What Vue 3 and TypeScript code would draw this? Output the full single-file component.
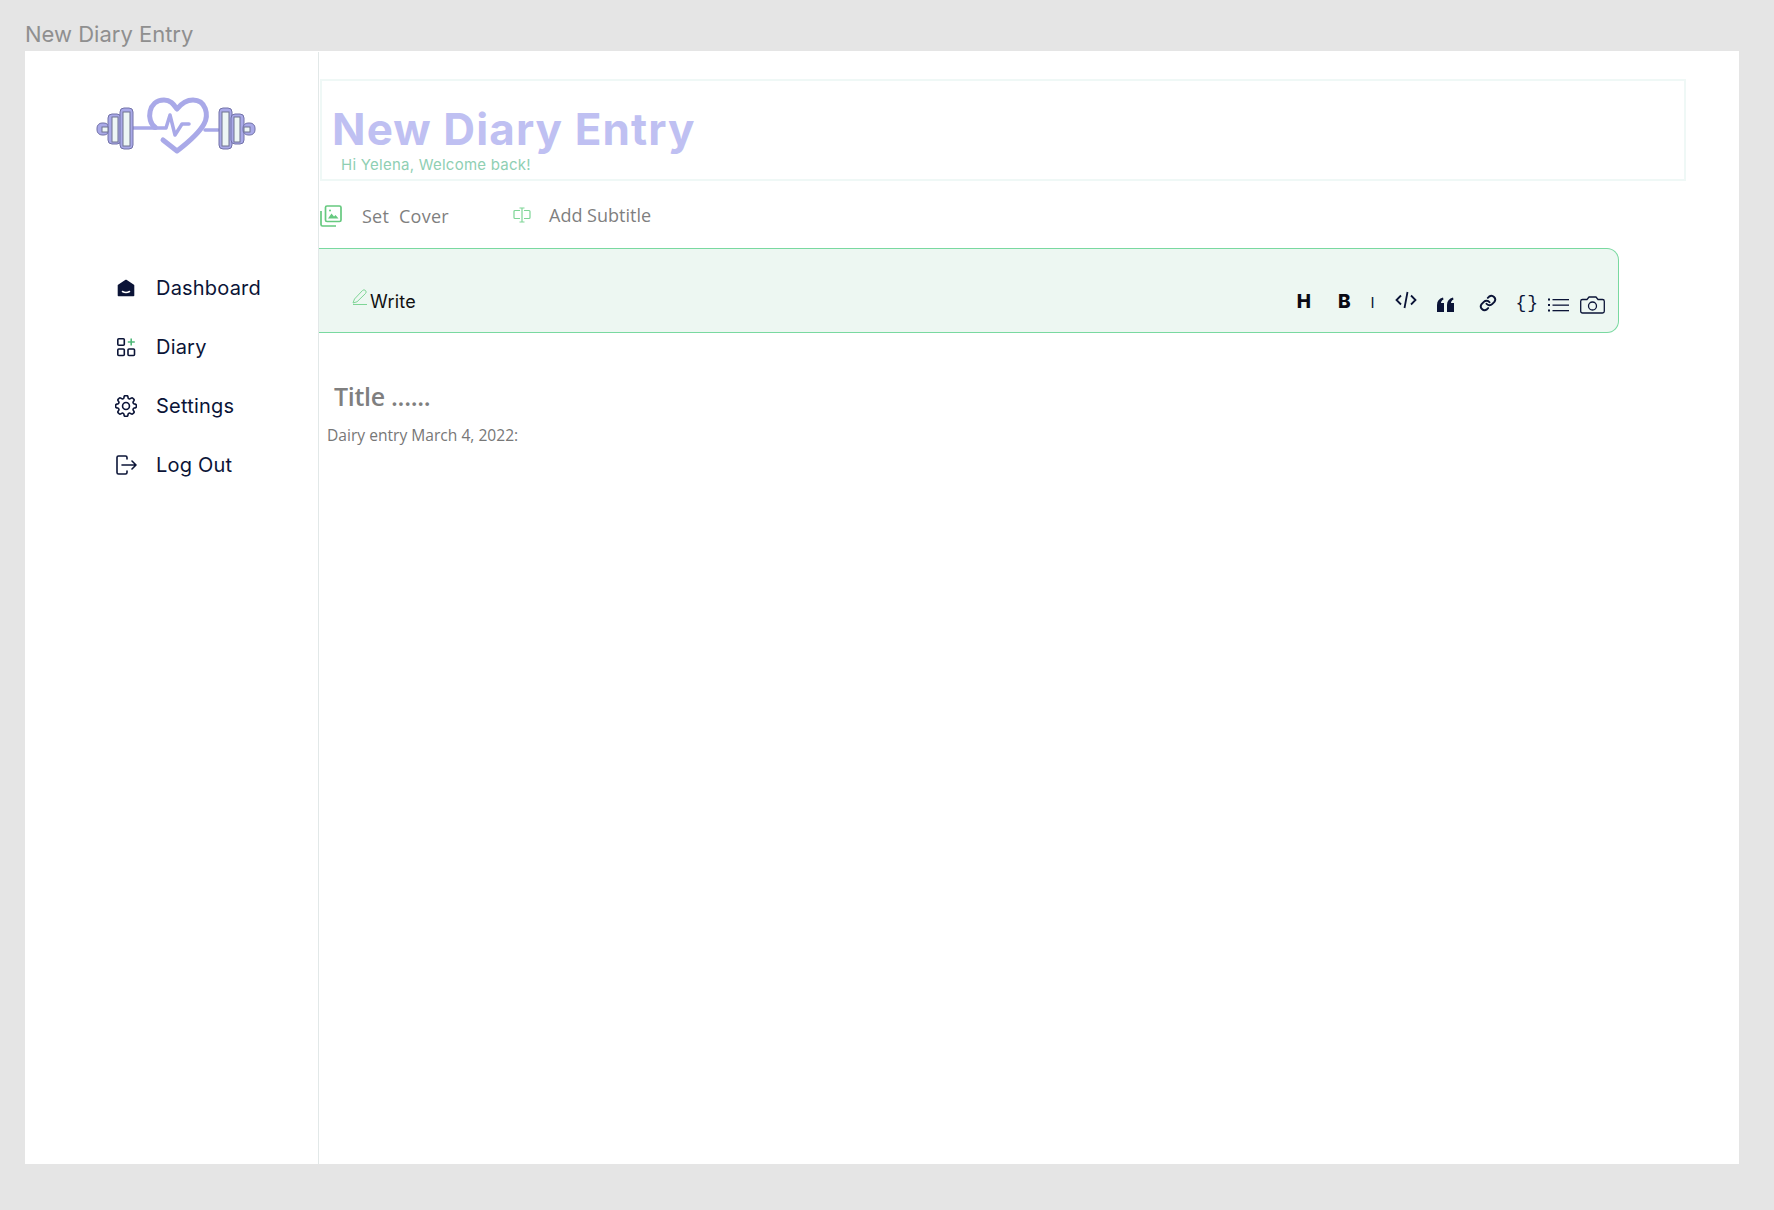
<script setup lang="ts">
const nav: { label: string; icon: string }[] = [
  { label: 'Dashboard', icon: 'home' },
  { label: 'Diary', icon: 'grid' },
  { label: 'Settings', icon: 'gear' },
  { label: 'Log Out', icon: 'logout' },
]
</script>

<template>
  <div class="page">
    <div class="frame-label">New Diary Entry</div>
    <div class="frame">
      <aside class="sidebar">
        <svg class="logo" width="160" height="58" viewBox="0 0 160 58" fill="none">
          <g stroke="#a9a9e8" stroke-linecap="round" stroke-linejoin="round">
            <path d="M36 31H60" stroke-width="3.500" />
            <path d="M109 33H122" stroke-width="3.500" />
            <path d="M59 30C50 24 52 3 68 3C75 3 78 8 81 12C85 7 90 3 97 3C110 3 113 18 108 27C102 38 90 47 81 54L67 43" stroke-width="5" />
            <path d="M58 31H70L74 18L79 38L86 27H93" stroke-width="3.500" />
          </g>
          <g stroke="#7272a8" stroke-width="1" fill="#a9a9e8">
            <rect x="1" y="26" width="12" height="12" rx="5" />
            <rect x="12" y="17" width="13" height="30" rx="4" />
            <rect x="24" y="11" width="13" height="41" rx="4" />
            <rect x="123" y="11" width="13" height="41" rx="4" />
            <rect x="135" y="17" width="13" height="30" rx="4" />
            <rect x="147" y="26" width="12" height="12" rx="5" />
          </g>
          <g fill="#edf6f5" stroke="#6f7390" stroke-width="1">
            <rect x="6" y="30" width="6" height="5" />
            <rect x="16" y="20" width="6" height="25" />
            <rect x="27" y="15" width="7" height="34" />
            <rect x="126" y="15" width="7" height="34" />
            <rect x="138" y="20" width="6" height="25" />
            <rect x="148" y="30" width="6" height="5" />
          </g>
        </svg>
        <nav class="nav">
          <a v-for="item in nav" :key="item.label" class="nav-item">
            <svg class="nav-icon" width="22" height="22" viewBox="0 0 22 22" fill="none" stroke="#0b1437" stroke-width="1.600">
              <template v-if="item.icon === 'home'">
                <path d="M3.500 8.500L11 3.500L18.500 8.500V18.500H3.500Z" fill="#0b1437" stroke-linejoin="round" />
                <path d="M7.500 14.500Q11 16.500 14.500 14.500" stroke="#fff" stroke-linecap="round" />
              </template>
              <template v-else-if="item.icon === 'grid'">
                <rect x="2.800" y="2.800" width="6.500" height="6.500" rx="1" />
                <rect x="2.800" y="13" width="6.500" height="6.500" rx="1" />
                <rect x="13" y="13" width="6.500" height="6.500" rx="1" />
                <path d="M16.200 2.500V9.500M12.800 6H19.800" stroke="#4fb878" />
              </template>
              <template v-else-if="item.icon === 'gear'">
                <g transform="translate(11 11) scale(1.150) translate(-12 -12)" stroke-width="1.400">
                  <path d="M10.343 3.940c.09-.542.56-.94 1.110-.94h1.093c.55 0 1.020.398 1.110.94l.149.894c.07.424.384.764.780.930.398.164.855.142 1.205-.108l.737-.527a1.125 1.125 0 011.450.120l.773.774c.39.389.44 1.002.120 1.450l-.527.737c-.25.35-.272.806-.107 1.204.165.397.505.710.930.780l.893.150c.543.09.94.56.94 1.109v1.094c0 .55-.397 1.020-.94 1.110l-.893.149c-.425.07-.765.383-.93.780-.165.398-.143.854.107 1.204l.527.738c.32.447.269 1.060-.12 1.450l-.774.773a1.125 1.125 0 01-1.449.120l-.738-.527c-.35-.25-.806-.272-1.203-.107-.397.165-.71.505-.781.929l-.149.894c-.09.542-.56.94-1.110.94h-1.094c-.55 0-1.019-.398-1.110-.94l-.148-.894c-.071-.424-.384-.764-.781-.93-.398-.164-.854-.142-1.204.108l-.738.527c-.447.32-1.060.269-1.450-.12l-.773-.774a1.125 1.125 0 01-.12-1.450l.527-.737c.25-.35.273-.806.108-1.204-.165-.397-.505-.71-.93-.78l-.894-.15c-.542-.09-.94-.56-.94-1.109v-1.094c0-.55.398-1.020.94-1.110l.894-.149c.424-.07.765-.383.93-.78.165-.398.143-.854-.107-1.204l-.527-.738a1.125 1.125 0 01.12-1.450l.773-.773a1.125 1.125 0 011.450-.12l.737.527c.35.25.807.272 1.204.107.397-.165.71-.505.78-.929l.15-.894z" />
                  <circle cx="12" cy="12" r="3" />
                </g>
              </template>
              <template v-else>
                <path d="M12 5V3.500A1.500 1.500 0 0 0 10.500 2H3.500A1.500 1.500 0 0 0 2 3.500V18.500A1.500 1.500 0 0 0 3.500 20H10.500A1.500 1.500 0 0 0 12 18.500V17" stroke-linecap="round" />
                <path d="M7 11H21M17 7L21 11L17 15" stroke-linecap="round" stroke-linejoin="round" />
              </template>
            </svg>
            <span>{{ item.label }}</span>
          </a>
        </nav>
      </aside>

      <main class="main">
        <header class="head">
          <h1>New Diary Entry</h1>
          <p>Hi Yelena, Welcome back!</p>
        </header>

        <div class="actions">
          <div class="action cover">
            <svg width="22" height="22" viewBox="0 0 22 22" fill="none" stroke="#66c97f" stroke-width="1.700">
              <rect x="5.500" y="1" width="15.500" height="15.500" rx="1.500" />
              <path d="M1 6V19.500A1.500 1.500 0 0 0 2.500 21H16" />
              <path d="M8 13.500L11.500 8.500L14 11.500L15.500 10L18.500 13.500Z" fill="#66c97f" stroke="none" />
              <circle cx="10" cy="5.500" r="1" fill="#66c97f" stroke="none" />
            </svg>
            <span>Set&nbsp; Cover</span>
          </div>
          <div class="action subtitle">
            <svg width="18" height="16" viewBox="0 0 18 16" fill="none" stroke="#7ed596" stroke-width="1.200">
              <path d="M7 3.500H2A1 1 0 0 0 1 4.500V10.500A1 1 0 0 0 2 11.500H7M11 3.500H16A1 1 0 0 1 17 4.500V10.500A1 1 0 0 1 16 11.500H11" />
              <path d="M6.500 1H11.500M9 1V15M6.500 15H11.500" />
            </svg>
            <span>Add Subtitle</span>
          </div>
        </div>

        <div class="toolbar">
          <div class="write">
            <svg width="17" height="17" viewBox="0 0 17 17" fill="none" stroke="#7ed596" stroke-width="1">
              <path d="M1 14L2.500 10L10.500 1.500A1.500 1.500 0 0 1 13.500 4.500L5 12.800Z" />
              <path d="M1 15.500H15" />
            </svg>
            <span>Write</span>
          </div>
          <div class="tools">
            <b class="t-h">H</b>
            <b class="t-b">B</b>
            <span class="t-i">I</span>
            <svg class="t-code" width="22" height="20" viewBox="0 0 22 20" fill="none" stroke="#0b1437" stroke-width="1.800">
              <path d="M6 5.500L1.500 10L6 14.500M16 5.500L20.500 10L16 14.500M12.500 2L9.500 18" />
            </svg>
            <svg class="t-quote" width="19" height="15" viewBox="0 0 19 15" fill="#0b1437">
              <path d="M1 15V8C1 4 3 1.500 7 .5L7.500 2.500C5.500 3.500 5 5 5 6H8V15ZM11 15V8C11 4 13 1.500 17 .5L17.500 2.500C15.500 3.500 15 5 15 6H18V15Z" />
            </svg>
            <svg class="t-link" width="18" height="18" viewBox="0 0 24 24" fill="none" stroke="#0b1437" stroke-width="2.600" stroke-linecap="round">
              <path d="M10 13a5 5 0 0 0 7.500.5l3-3a5 5 0 0 0-7-7l-1.700 1.700" />
              <path d="M14 11a5 5 0 0 0-7.500-.5l-3 3a5 5 0 0 0 7 7l1.700-1.700" />
            </svg>
            <span class="t-brace">{ }</span>
            <svg class="t-list" width="21" height="14" viewBox="0 0 21 14" fill="#0b1437">
              <rect x="0" y="0.500" width="2" height="2" /><rect x="0" y="6" width="2" height="2" /><rect x="0" y="11.500" width="2" height="2" />
              <rect x="4.500" y="1" width="16.500" height="1.300" /><rect x="4.500" y="6.500" width="16.500" height="1.300" /><rect x="4.500" y="12" width="16.500" height="1.300" />
            </svg>
            <svg class="t-cam" width="25" height="18" viewBox="0 0 25 18" fill="none" stroke="#0b1437" stroke-width="1.300">
              <path d="M2.500 3.500H7L9 1H16L18 3.500H22.500A1.800 1.800 0 0 1 24.300 5.300V15.200A1.800 1.800 0 0 1 22.500 17H2.500A1.800 1.800 0 0 1 .7 15.200V5.300A1.800 1.800 0 0 1 2.500 3.500Z" stroke-linejoin="round" />
              <circle cx="12.500" cy="10" r="4" />
            </svg>
          </div>
        </div>

        <div class="title">Title ......</div>
        <div class="entry">Dairy entry March 4, 2022:</div>
      </main>
    </div>
  </div>
</template>

<style>
html, body {
  margin: 0;
  background: #e5e5e5;
}
</style>

<style scoped>
.page {
  width: 1774px;
  height: 1210px;
  background: #e5e5e5;
  overflow: hidden;
  font-family: "Open Sans", "Liberation Sans", sans-serif;
}
.frame-label {
  height: 51px;
  box-sizing: border-box;
  padding: 21px 0 0 25px;
  font: 400 22px/26px Inter, "Liberation Sans", sans-serif;
  color: #8f8f8f;
}
.frame {
  margin-left: 25px;
  width: 1714px;
  height: 1113px;
  background: #fff;
  display: flex;
}
.sidebar {
  width: 222px;
  flex: none;
  border-right: 1px solid #e2e8e8;
  margin-top: 1px;
  padding: 45px 0 0 71px;
}
.logo {
  display: block;
}
.nav {
  margin-top: 118px;
  padding-left: 19px;
  display: flex;
  flex-direction: column;
  gap: 29px;
}
.nav-item {
  display: flex;
  align-items: center;
  height: 30px;
  gap: 19px;
  font: 400 20px/30px Inter, sans-serif;
  letter-spacing: 0.2px;
  color: #0b1437;
}
.main {
  flex: 1;
  min-width: 0;
  padding-top: 28px;
}
.head {
  width: 1366px;
  height: 102px;
  box-sizing: border-box;
  margin-left: 1px;
  border: 2px solid #eff8f6;
  padding-left: 10px;
}
.head h1 {
  margin: 0;
  padding-top: 21px;
  font: 700 44px/54px Inter, sans-serif;
  letter-spacing: 1.100px;
  color: #bfc0f2;
}
.head p {
  margin: 0 0 0 9px;
  font: 400 15px/18px Inter, sans-serif;
  letter-spacing: 0.250px;
  color: #8fcfb3;
}
.actions {
  display: flex;
  align-items: center;
  height: 67px;
  color: #7f7f7f;
  font: 500 18px/24px "Open Sans", sans-serif;
}
.action {
  display: flex;
  align-items: center;
}
.cover {
  margin-left: 1px;
  gap: 20px;
  width: 193px;
  padding-top: 2px;
  letter-spacing: 0.250px;
}
.subtitle {
  gap: 18px;
}
.toolbar {
  width: 1300px;
  height: 85px;
  box-sizing: border-box;
  border: 1px solid #79d9a0;
  border-left: none;
  border-radius: 0 12px 12px 0;
  background: #edf7f2;
  display: flex;
  align-items: flex-end;
  justify-content: space-between;
  padding: 0 13px 14px 33px;
}
.write {
  display: flex;
  align-items: flex-end;
  gap: 1px;
  font: 400 18px/24px Inter, sans-serif;
  letter-spacing: 0.250px;
  color: #111;
  margin-bottom: 4px;
}
.write svg {
  margin-bottom: 8px;
}
.tools {
  display: flex;
  align-items: center;
  color: #0b1437;
  height: 30px;
}
.t-h, .t-b {
  font: 800 19px/24px Inter, sans-serif;
  color: #0a0a14;
  margin-top: -2px;
}
.t-b { margin-left: 27px; }
.t-i { margin-left: 20px; margin-top: -1px; font: 400 15px/24px Inter, sans-serif; }
.t-code { margin-left: 20px; margin-top: -6px; }
.t-quote { margin-left: 19px; margin-top: 2px; }
.t-link { margin-left: 24px; }
.t-brace { margin-left: 19px; font: 400 18px/24px "Liberation Mono", monospace; white-space: nowrap; letter-spacing: -5px; }
.t-list { margin-left: 15px; margin-top: 3px; }
.t-cam { margin-left: 11px; margin-top: 3px; }
.title {
  margin: 45px 0 0 15px;
  font: 600 25px/36px "Open Sans", sans-serif;
  letter-spacing: -0.300px;
  color: #7f7f7f;
}
.entry {
  margin: 10px 0 0 8px;
  font: 500 15.600px/22px "Open Sans", sans-serif;
  color: #777;
}
</style>
